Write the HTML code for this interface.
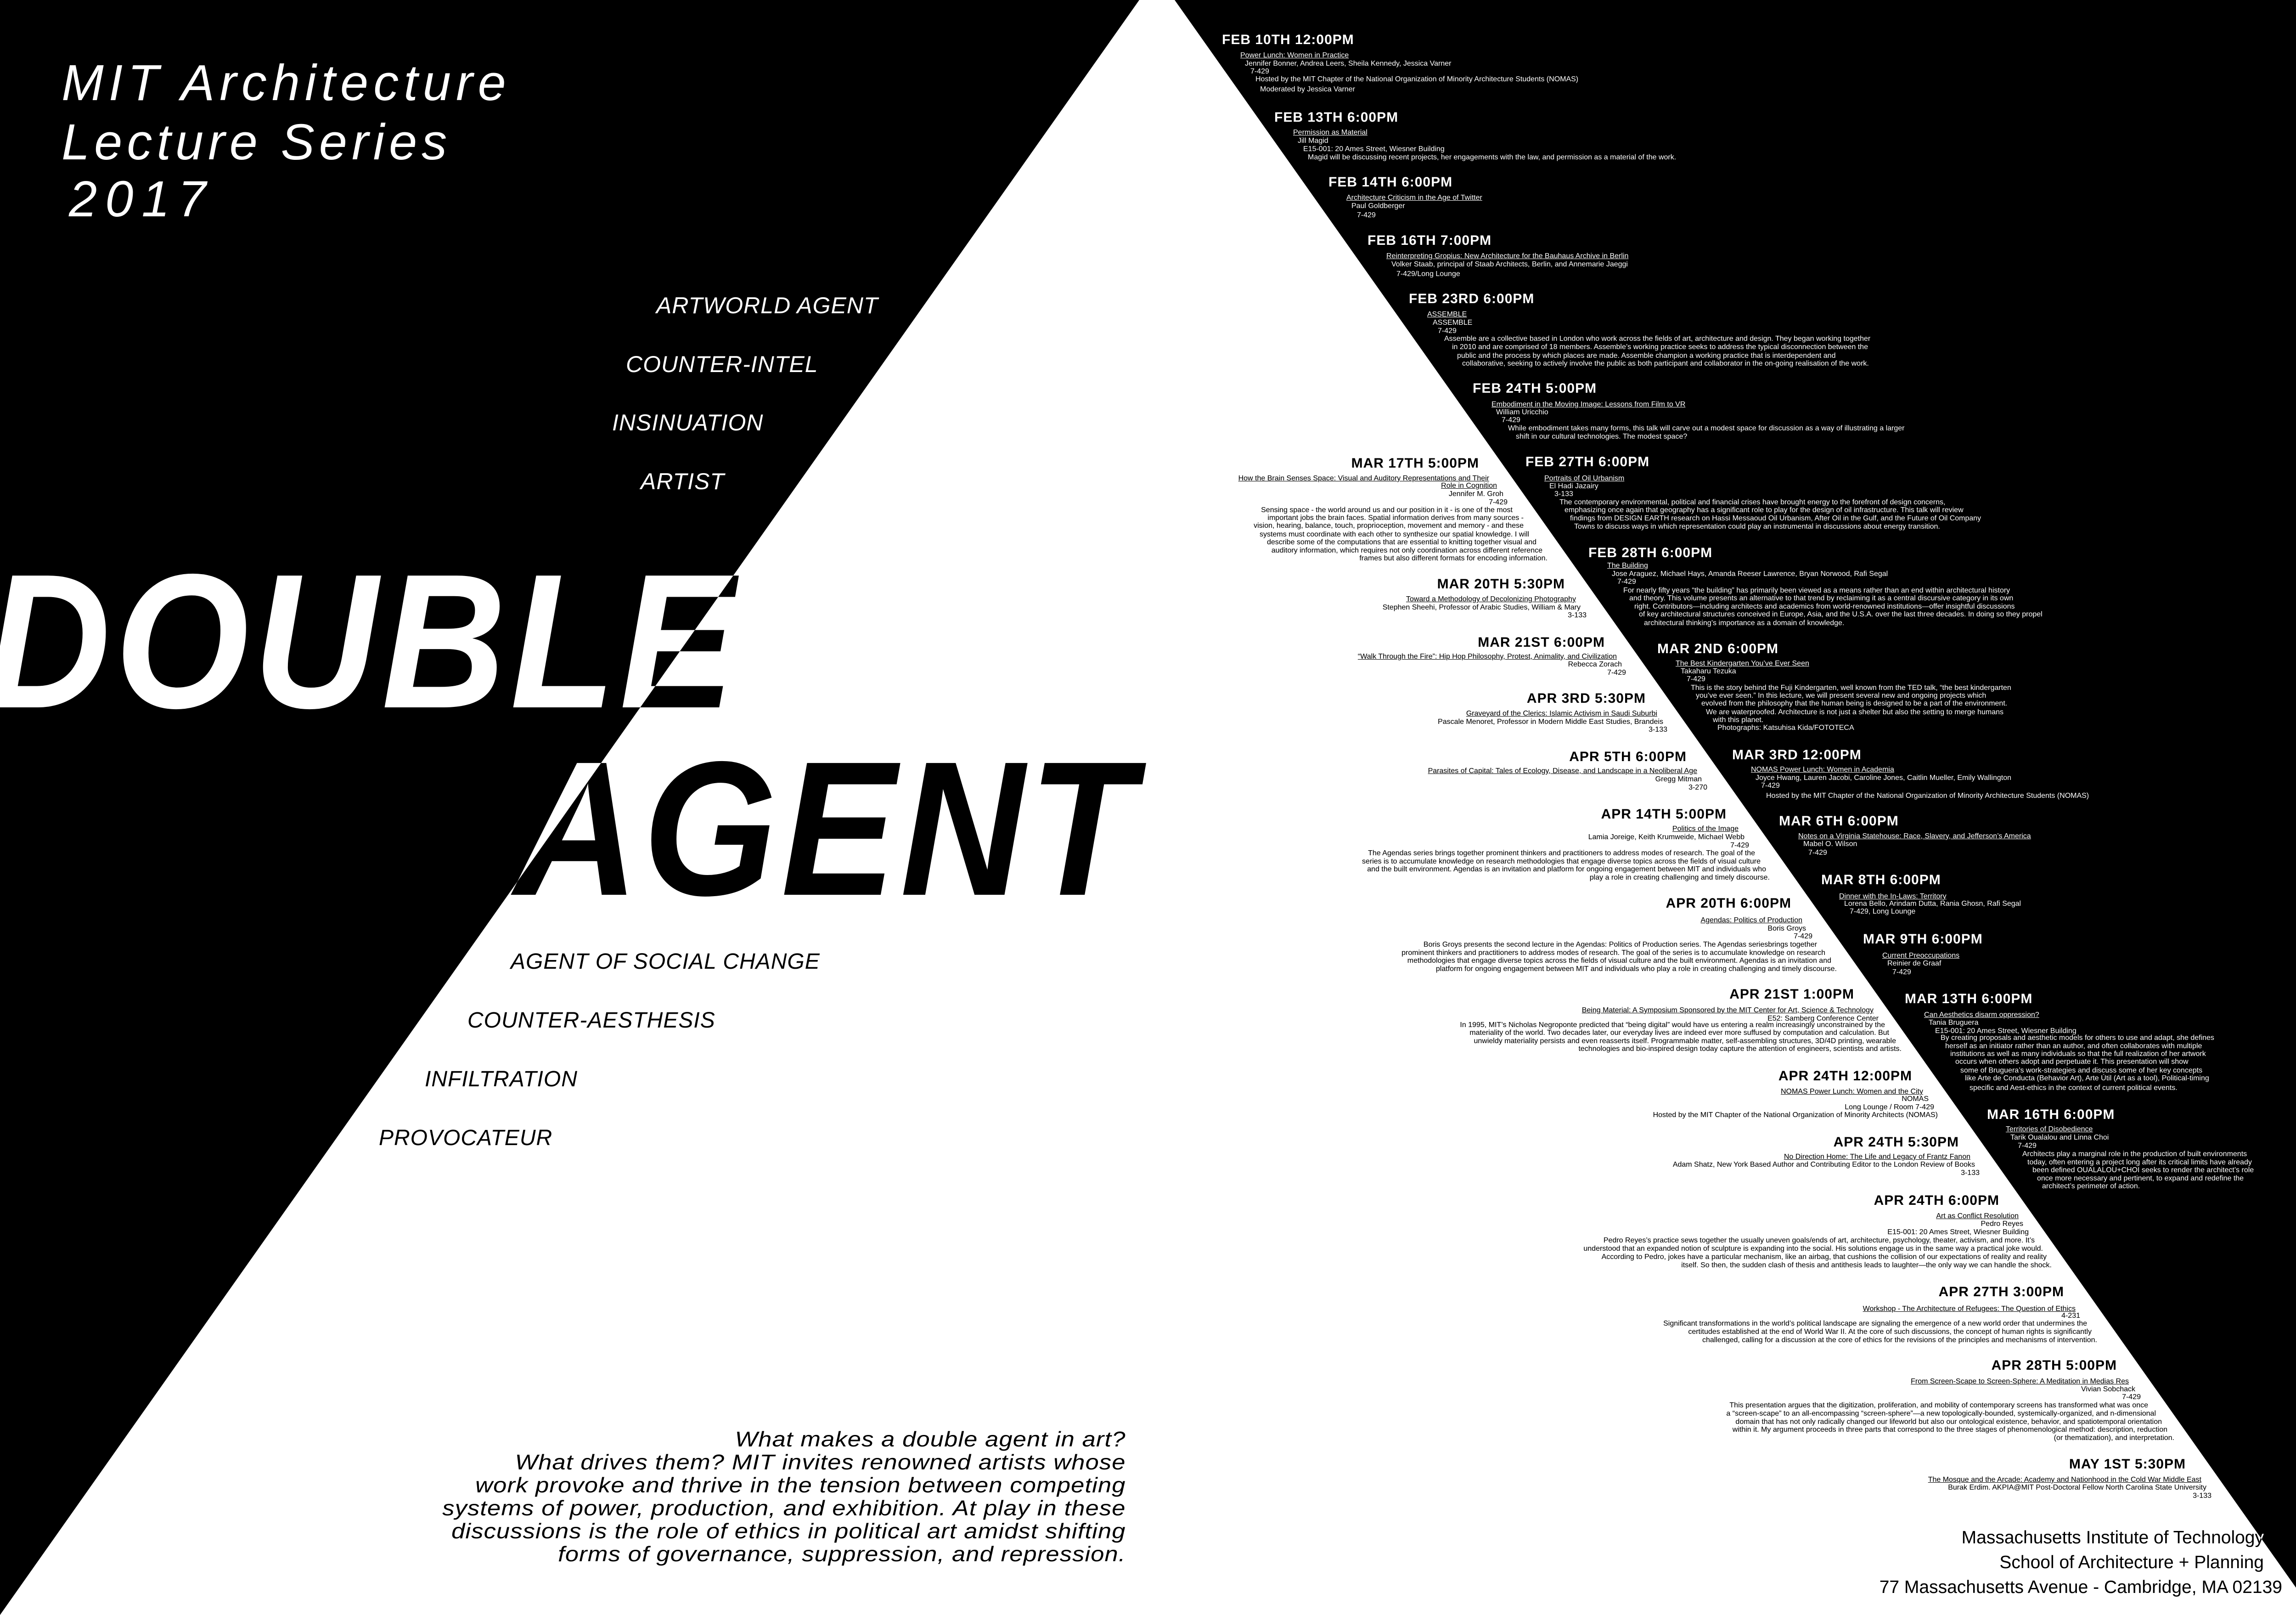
<!DOCTYPE html>
<html><head><meta charset="utf-8"><style>
html,body{margin:0;padding:0}
body{width:5042px;height:3516px;position:relative;overflow:hidden;background:#fff;font-family:"Liberation Sans",sans-serif}
svg.bg{position:absolute;left:0;top:0}
.t{position:absolute;color:#fff;mix-blend-mode:difference;white-space:nowrap;line-height:1}
.b{font-size:16px}
.h{font-size:30px;font-weight:bold;letter-spacing:1px}
.u{text-decoration:underline}
.k{font-style:italic;font-size:50px;letter-spacing:1px}
.k2{font-style:italic;font-size:48px;letter-spacing:1px}
.big{font-weight:bold;font-style:italic;font-size:417px;transform-origin:0 0;transform:scaleX(.9);letter-spacing:10px}
.hd{font-style:italic;font-size:110px}
</style></head><body>
<svg class="bg" width="5042" height="3516"><polygon points="0,0 2481,0 0,3516" fill="#000"/><polygon points="2558,0 5042,0 5042,3516" fill="#000"/></svg>

<div class="t hd" style="left:134px;top:126px;letter-spacing:11px">MIT Architecture</div>
<div class="t hd" style="left:134px;top:255px;letter-spacing:10px">Lecture Series</div>
<div class="t hd" style="left:150px;top:379px;letter-spacing:18px">2017</div>

<div class="t k" style="left:1429px;top:640px">ARTWORLD AGENT</div>
<div class="t k" style="left:1363px;top:768px">COUNTER-INTEL</div>
<div class="t k" style="left:1333px;top:895px">INSINUATION</div>
<div class="t k" style="left:1395px;top:1023px">ARTIST</div>

<div class="t big" style="left:-30px;top:1188px">DOUBLE</div>
<div class="t big" style="left:1120px;top:1596px">AGENT</div>

<div class="t k2" style="left:1112px;top:2070px">AGENT OF SOCIAL CHANGE</div>
<div class="t k2" style="left:1018px;top:2198px">COUNTER-AESTHESIS</div>
<div class="t k2" style="left:925px;top:2326px">INFILTRATION</div>
<div class="t k2" style="left:825px;top:2454px">PROVOCATEUR</div>

<div class="t" style="right:2590px;top:3108px;text-align:right;font-style:italic;font-size:46px;line-height:50px;letter-spacing:1px;transform-origin:100% 0;transform:scaleX(1.14)">What makes a double agent in art?<br>What drives them? MIT invites renowned artists whose<br>work provoke and thrive in the tension between competing<br>systems of power, production, and exhibition. At play in these<br>discussions is the role of ethics in political art amidst shifting<br>forms of governance, suppression, and repression.</div>

<div class="t" style="right:112px;top:3328px;font-size:39px">Massachusetts Institute of Technology</div>
<div class="t" style="right:112px;top:3382px;font-size:39px">School of Architecture + Planning</div>
<div class="t" style="right:72px;top:3436px;font-size:39px">77 Massachusetts Avenue - Cambridge, MA 02139</div>

<!-- BLACK SIDE (left aligned) -->
<div class="t h" style="left:2661px;top:72px">FEB 10TH 12:00PM</div>
<div class="t b u" style="left:2701px;top:113px">Power Lunch: Women in Practice</div>
<div class="t b" style="left:2711px;top:131px">Jennifer Bonner, Andrea Leers, Sheila Kennedy, Jessica Varner</div>
<div class="t b" style="left:2723px;top:148px">7-429</div>
<div class="t b" style="left:2734px;top:165px">Hosted by the MIT Chapter of the National Organization of Minority Architecture Students (NOMAS)</div>
<div class="t b" style="left:2744px;top:187px">Moderated by Jessica Varner</div>

<div class="t h" style="left:2775px;top:241px">FEB 13TH 6:00PM</div>
<div class="t b u" style="left:2816px;top:281px">Permission as Material</div>
<div class="t b" style="left:2826px;top:299px">Jill Magid</div>
<div class="t b" style="left:2838px;top:317px">E15-001: 20 Ames Street, Wiesner Building</div>
<div class="t b" style="left:2848px;top:335px">Magid will be discussing recent projects, her engagements with the law, and permission as a material of the work.</div>

<div class="t h" style="left:2893px;top:382px">FEB 14TH 6:00PM</div>
<div class="t b u" style="left:2932px;top:423px">Architecture Criticism in the Age of Twitter</div>
<div class="t b" style="left:2943px;top:441px">Paul Goldberger</div>
<div class="t b" style="left:2955px;top:461px">7-429</div>

<div class="t h" style="left:2978px;top:509px">FEB 16TH 7:00PM</div>
<div class="t b u" style="left:3019px;top:550px">Reinterpreting Gropius: New Architecture for the Bauhaus Archive in Berlin</div>
<div class="t b" style="left:3030px;top:568px">Volker Staab, principal of Staab Architects, Berlin, and Annemarie Jaeggi</div>
<div class="t b" style="left:3041px;top:589px">7-429/Long Lounge</div>

<div class="t h" style="left:3068px;top:636px">FEB 23RD 6:00PM</div>
<div class="t b u" style="left:3108px;top:677px">ASSEMBLE</div>
<div class="t b" style="left:3120px;top:695px">ASSEMBLE</div>
<div class="t b" style="left:3131px;top:713px">7-429</div>
<div class="t b" style="left:3145px;top:730px">Assemble are a collective based in London who work across the fields of art, architecture and design. They began working together</div>
<div class="t b" style="left:3162px;top:748px">in 2010 and are comprised of 18 members. Assemble’s working practice seeks to address the typical disconnection between the</div>
<div class="t b" style="left:3173px;top:767px">public and the process by which places are made. Assemble champion a working practice that is interdependent and</div>
<div class="t b" style="left:3184px;top:784px">collaborative, seeking to actively involve the public as both participant and collaborator in the on-going realisation of the work.</div>

<div class="t h" style="left:3207px;top:831px">FEB 24TH 5:00PM</div>
<div class="t b u" style="left:3248px;top:873px">Embodiment in the Moving Image: Lessons from Film to VR</div>
<div class="t b" style="left:3258px;top:890px">William Uricchio</div>
<div class="t b" style="left:3270px;top:907px">7-429</div>
<div class="t b" style="left:3284px;top:925px">While embodiment takes many forms, this talk will carve out a modest space for discussion as a way of illustrating a larger</div>
<div class="t b" style="left:3301px;top:943px">shift in our cultural technologies. The modest space?</div>

<div class="t h" style="left:3322px;top:991px">FEB 27TH 6:00PM</div>
<div class="t b u" style="left:3363px;top:1034px">Portraits of Oil Urbanism</div>
<div class="t b" style="left:3374px;top:1051px">El Hadi Jazairy</div>
<div class="t b" style="left:3385px;top:1068px">3-133</div>
<div class="t b" style="left:3396px;top:1086px">The contemporary environmental, political and financial crises have brought energy to the forefront of design concerns,</div>
<div class="t b" style="left:3407px;top:1103px">emphasizing once again that geography has a significant role to play for the design of oil infrastructure. This talk will review</div>
<div class="t b" style="left:3419px;top:1121px">findings from DESIGN EARTH research on Hassi Messaoud Oil Urbanism, After Oil in the Gulf, and the Future of Oil Company</div>
<div class="t b" style="left:3428px;top:1139px">Towns to discuss ways in which representation could play an instrumental in discussions about energy transition.</div>

<div class="t h" style="left:3459px;top:1189px">FEB 28TH 6:00PM</div>
<div class="t b u" style="left:3500px;top:1224px">The Building</div>
<div class="t b" style="left:3510px;top:1242px">Jose Araguez, Michael Hays, Amanda Reeser Lawrence, Bryan Norwood, Rafi Segal</div>
<div class="t b" style="left:3522px;top:1259px">7-429</div>
<div class="t b" style="left:3535px;top:1278px">For nearly fifty years “the building” has primarily been viewed as a means rather than an end within architectural history</div>
<div class="t b" style="left:3548px;top:1295px">and theory. This volume presents an alternative to that trend by reclaiming it as a central discursive category in its own</div>
<div class="t b" style="left:3559px;top:1313px">right. Contributors—including architects and academics from world-renowned institutions—offer insightful discussions</div>
<div class="t b" style="left:3569px;top:1330px">of key architectural structures conceived in Europe, Asia, and the U.S.A. over the last three decades. In doing so they propel</div>
<div class="t b" style="left:3580px;top:1349px">architectural thinking’s importance as a domain of knowledge.</div>

<div class="t h" style="left:3609px;top:1398px">MAR 2ND 6:00PM</div>
<div class="t b u" style="left:3649px;top:1437px">The Best Kindergarten You’ve Ever Seen</div>
<div class="t b" style="left:3660px;top:1454px">Takaharu Tezuka</div>
<div class="t b" style="left:3673px;top:1471px">7-429</div>
<div class="t b" style="left:3682px;top:1490px">This is the story behind the Fuji Kindergarten, well known from the TED talk, “the best kindergarten</div>
<div class="t b" style="left:3693px;top:1507px">you’ve ever seen.” In this lecture, we will present several new and ongoing projects which</div>
<div class="t b" style="left:3705px;top:1524px">evolved from the philosophy that the human being is designed to be a part of the environment.</div>
<div class="t b" style="left:3715px;top:1543px">We are waterproofed. Architecture is not just a shelter but also the setting to merge humans</div>
<div class="t b" style="left:3730px;top:1560px">with this planet.</div>
<div class="t b" style="left:3740px;top:1577px">Photographs: Katsuhisa Kida/FOTOTECA</div>

<div class="t h" style="left:3772px;top:1629px">MAR 3RD 12:00PM</div>
<div class="t b u" style="left:3813px;top:1668px">NOMAS Power Lunch: Women in Academia</div>
<div class="t b" style="left:3823px;top:1686px">Joyce Hwang, Lauren Jacobi, Caroline Jones, Caitlin Mueller, Emily Wallington</div>
<div class="t b" style="left:3835px;top:1703px">7-429</div>
<div class="t b" style="left:3846px;top:1725px">Hosted by the MIT Chapter of the National Organization of Minority Architecture Students (NOMAS)</div>

<div class="t h" style="left:3874px;top:1773px">MAR 6TH 6:00PM</div>
<div class="t b u" style="left:3916px;top:1813px">Notes on a Virginia Statehouse: Race, Slavery, and Jefferson’s America</div>
<div class="t b" style="left:3927px;top:1830px">Mabel O. Wilson</div>
<div class="t b" style="left:3938px;top:1849px">7-429</div>

<div class="t h" style="left:3966px;top:1901px">MAR 8TH 6:00PM</div>
<div class="t b u" style="left:4005px;top:1944px">Dinner with the In-Laws: Territory</div>
<div class="t b" style="left:4016px;top:1960px">Lorena Bello, Arindam Dutta, Rania Ghosn, Rafi Segal</div>
<div class="t b" style="left:4028px;top:1977px">7-429, Long Lounge</div>

<div class="t h" style="left:4057px;top:2030px">MAR 9TH 6:00PM</div>
<div class="t b u" style="left:4099px;top:2073px">Current Preoccupations</div>
<div class="t b" style="left:4110px;top:2090px">Reinier de Graaf</div>
<div class="t b" style="left:4121px;top:2109px">7-429</div>

<div class="t h" style="left:4148px;top:2160px">MAR 13TH 6:00PM</div>
<div class="t b u" style="left:4190px;top:2202px">Can Aesthetics disarm oppression?</div>
<div class="t b" style="left:4200px;top:2219px">Tania Bruguera</div>
<div class="t b" style="left:4214px;top:2237px">E15-001: 20 Ames Street, Wiesner Building</div>
<div class="t b" style="left:4226px;top:2252px">By creating proposals and aesthetic models for others to use and adapt, she defines</div>
<div class="t b" style="left:4236px;top:2270px">herself as an initiator rather than an author, and often collaborates with multiple</div>
<div class="t b" style="left:4247px;top:2287px">institutions as well as many individuals so that the full realization of her artwork</div>
<div class="t b" style="left:4258px;top:2304px">occurs when others adopt and perpetuate it. This presentation will show</div>
<div class="t b" style="left:4269px;top:2323px">some of Bruguera’s work-strategies and discuss some of her key concepts</div>
<div class="t b" style="left:4279px;top:2340px">like Arte de Conducta (Behavior Art), Arte Útil (Art as a tool), Political-timing</div>
<div class="t b" style="left:4289px;top:2361px">specific and Aest-ethics in the context of current political events.</div>

<div class="t h" style="left:4327px;top:2412px">MAR 16TH 6:00PM</div>
<div class="t b u" style="left:4368px;top:2451px">Territories of Disobedience</div>
<div class="t b" style="left:4378px;top:2469px">Tarik Oualalou and Linna Choi</div>
<div class="t b" style="left:4394px;top:2487px">7-429</div>
<div class="t b" style="left:4404px;top:2505px">Architects play a marginal role in the production of built environments</div>
<div class="t b" style="left:4415px;top:2523px">today, often entering a project long after its critical limits have already</div>
<div class="t b" style="left:4426px;top:2540px">been defined OUALALOU+CHOI seeks to render the architect’s role</div>
<div class="t b" style="left:4436px;top:2558px">once more necessary and pertinent, to expand and redefine the</div>
<div class="t b" style="left:4447px;top:2575px">architect’s perimeter of action.</div>

<!-- WHITE SIDE (right aligned) -->
<div class="t h" style="right:1821px;top:994px">MAR 17TH 5:00PM</div>
<div class="t b u" style="right:1799px;top:1034px">How the Brain Senses Space: Visual and Auditory Representations and Their</div>
<div class="t b u" style="right:1782px;top:1050px">Role in Cognition</div>
<div class="t b" style="right:1768px;top:1068px">Jennifer M. Groh</div>
<div class="t b" style="right:1759px;top:1086px">7-429</div>
<div class="t b" style="right:1748px;top:1103px">Sensing space - the world around us and our position in it - is one of the most</div>
<div class="t b" style="right:1724px;top:1120px">important jobs the brain faces. Spatial information derives from many sources -</div>
<div class="t b" style="right:1724px;top:1137px">vision, hearing, balance, touch, proprioception, movement and memory - and these</div>
<div class="t b" style="right:1712px;top:1156px">systems must coordinate with each other to synthesize our spatial knowledge. I will</div>
<div class="t b" style="right:1696px;top:1173px">describe some of the computations that are essential to knitting together visual and</div>
<div class="t b" style="right:1683px;top:1191px">auditory information, which requires not only coordination across different reference</div>
<div class="t b" style="right:1672px;top:1208px">frames but also different formats for encoding information.</div>

<div class="t h" style="right:1634px;top:1257px">MAR 20TH 5:30PM</div>
<div class="t b u" style="right:1610px;top:1297px">Toward a Methodology of Decolonizing Photography</div>
<div class="t b" style="right:1600px;top:1315px">Stephen Sheehi, Professor of Arabic Studies, William &amp; Mary</div>
<div class="t b" style="right:1587px;top:1332px">3-133</div>

<div class="t h" style="right:1547px;top:1384px">MAR 21ST 6:00PM</div>
<div class="t b u" style="right:1521px;top:1422px">“Walk Through the Fire”: Hip Hop Philosophy, Protest, Animality, and Civilization</div>
<div class="t b" style="right:1510px;top:1439px">Rebecca Zorach</div>
<div class="t b" style="right:1501px;top:1457px">7-429</div>

<div class="t h" style="right:1458px;top:1506px">APR 3RD 5:30PM</div>
<div class="t b u" style="right:1433px;top:1546px">Graveyard of the Clerics: Islamic Activism in Saudi Suburbi</div>
<div class="t b" style="right:1420px;top:1564px">Pascale Menoret, Professor in Modern Middle East Studies, Brandeis</div>
<div class="t b" style="right:1411px;top:1581px">3-133</div>

<div class="t h" style="right:1369px;top:1633px">APR 5TH 6:00PM</div>
<div class="t b u" style="right:1346px;top:1671px">Parasites of Capital: Tales of Ecology, Disease, and Landscape in a Neoliberal Age</div>
<div class="t b" style="right:1336px;top:1689px">Gregg Mitman</div>
<div class="t b" style="right:1324px;top:1707px">3-270</div>

<div class="t h" style="right:1282px;top:1758px">APR 14TH 5:00PM</div>
<div class="t b u" style="right:1256px;top:1797px">Politics of the Image</div>
<div class="t b" style="right:1243px;top:1815px">Lamia Joreige, Keith Krumweide, Michael Webb</div>
<div class="t b" style="right:1233px;top:1833px">7-429</div>
<div class="t b" style="right:1220px;top:1850px">The Agendas series brings together prominent thinkers and practitioners to address modes of research. The goal of the</div>
<div class="t b" style="right:1208px;top:1868px">series is to accumulate knowledge on research methodologies that engage diverse topics across the fields of visual culture</div>
<div class="t b" style="right:1196px;top:1885px">and the built environment. Agendas is an invitation and platform for ongoing engagement between MIT and individuals who</div>
<div class="t b" style="right:1188px;top:1903px">play a role in creating challenging and timely discourse.</div>

<div class="t h" style="right:1141px;top:1952px">APR 20TH 6:00PM</div>
<div class="t b u" style="right:1117px;top:1996px">Agendas: Politics of Production</div>
<div class="t b" style="right:1109px;top:2014px">Boris Groys</div>
<div class="t b" style="right:1095px;top:2031px">7-429</div>
<div class="t b" style="right:1085px;top:2049px">Boris Groys presents the second lecture in the Agendas: Politics of Production series. The Agendas seriesbrings together</div>
<div class="t b" style="right:1067px;top:2067px">prominent thinkers and practitioners to address modes of research. The goal of the series is to accumulate knowledge on research</div>
<div class="t b" style="right:1054px;top:2084px">methodologies that engage diverse topics across the fields of visual culture and the built environment. Agendas is an invitation and</div>
<div class="t b" style="right:1042px;top:2102px">platform for ongoing engagement between MIT and individuals who play a role in creating challenging and timely discourse.</div>

<div class="t h" style="right:1004px;top:2150px">APR 21ST 1:00PM</div>
<div class="t b u" style="right:962px;top:2192px">Being Material: A Symposium Sponsored by the MIT Center for Art, Science &amp; Technology</div>
<div class="t b" style="right:951px;top:2210px">E52: Samberg Conference Center</div>
<div class="t b" style="right:937px;top:2224px">In 1995, MIT’s Nicholas Negroponte predicted that “being digital” would have us entering a realm increasingly unconstrained by the</div>
<div class="t b" style="right:928px;top:2241px">materiality of the world. Two decades later, our everyday lives are indeed ever more suffused by computation and calculation. But</div>
<div class="t b" style="right:913px;top:2259px">unwieldy materiality persists and even reasserts itself. Programmable matter, self-assembling structures, 3D/4D printing, wearable</div>
<div class="t b" style="right:901px;top:2276px">technologies and bio-inspired design today capture the attention of engineers, scientists and artists.</div>

<div class="t h" style="right:878px;top:2328px">APR 24TH 12:00PM</div>
<div class="t b u" style="right:854px;top:2369px">NOMAS Power Lunch: Women and the City</div>
<div class="t b" style="right:842px;top:2385px">NOMAS</div>
<div class="t b" style="right:830px;top:2403px">Long Lounge / Room 7-429</div>
<div class="t b" style="right:822px;top:2420px">Hosted by the MIT Chapter of the National Organization of Minority Architects (NOMAS)</div>

<div class="t h" style="right:776px;top:2472px">APR 24TH 5:30PM</div>
<div class="t b u" style="right:751px;top:2511px">No Direction Home: The Life and Legacy of Frantz Fanon</div>
<div class="t b" style="right:741px;top:2528px">Adam Shatz, New York Based Author and Contributing Editor to the London Review of Books</div>
<div class="t b" style="right:731px;top:2546px">3-133</div>

<div class="t h" style="right:688px;top:2599px">APR 24TH 6:00PM</div>
<div class="t b u" style="right:646px;top:2640px">Art as Conflict Resolution</div>
<div class="t b" style="right:636px;top:2657px">Pedro Reyes</div>
<div class="t b" style="right:624px;top:2675px">E15-001: 20 Ames Street, Wiesner Building</div>
<div class="t b" style="right:611px;top:2693px">Pedro Reyes’s practice sews together the usually uneven goals/ends of art, architecture, psychology, theater, activism, and more. It’s</div>
<div class="t b" style="right:593px;top:2711px">understood that an expanded notion of sculpture is expanding into the social. His solutions engage us in the same way a practical joke would.</div>
<div class="t b" style="right:585px;top:2729px">According to Pedro, jokes have a particular mechanism, like an airbag, that cushions the collision of our expectations of reality and reality</div>
<div class="t b" style="right:574px;top:2747px">itself. So then, the sudden clash of thesis and antithesis leads to laughter—the only way we can handle the shock.</div>

<div class="t h" style="right:547px;top:2798px">APR 27TH 3:00PM</div>
<div class="t b u" style="right:522px;top:2842px">Workshop - The Architecture of Refugees: The Question of Ethics</div>
<div class="t b" style="right:512px;top:2857px">4-231</div>
<div class="t b" style="right:497px;top:2874px">Significant transformations in the world’s political landscape are signaling the emergence of a new world order that undermines the</div>
<div class="t b" style="right:487px;top:2892px">certitudes established at the end of World War II. At the core of such discussions, the concept of human rights is significantly</div>
<div class="t b" style="right:475px;top:2910px">challenged, calling for a discussion at the core of ethics for the revisions of the principles and mechanisms of intervention.</div>

<div class="t h" style="right:432px;top:2958px">APR 28TH 5:00PM</div>
<div class="t b u" style="right:406px;top:3000px">From Screen-Scape to Screen-Sphere: A Meditation in Medias Res</div>
<div class="t b" style="right:392px;top:3017px">Vivian Sobchack</div>
<div class="t b" style="right:380px;top:3034px">7-429</div>
<div class="t b" style="right:364px;top:3052px">This presentation argues that the digitization, proliferation, and mobility of contemporary screens has transformed what was once</div>
<div class="t b" style="right:347px;top:3070px">a “screen-scape” to an all-encompassing “screen-sphere”—a new topologically-bounded, systemically-organized, and n-dimensional</div>
<div class="t b" style="right:334px;top:3088px">domain that has not only radically changed our lifeworld but also our ontological existence, behavior, and spatiotemporal orientation</div>
<div class="t b" style="right:322px;top:3105px">within it. My argument proceeds in three parts that correspond to the three stages of phenomenological method: description, reduction</div>
<div class="t b" style="right:307px;top:3123px">(or thematization), and interpretation.</div>

<div class="t h" style="right:282px;top:3173px">MAY 1ST 5:30PM</div>
<div class="t b u" style="right:248px;top:3214px">The Mosque and the Arcade: Academy and Nationhood in the Cold War Middle East</div>
<div class="t b" style="right:237px;top:3231px">Burak Erdim. AKPIA@MIT Post-Doctoral Fellow North Carolina State University</div>
<div class="t b" style="right:226px;top:3249px">3-133</div>
</body></html>
